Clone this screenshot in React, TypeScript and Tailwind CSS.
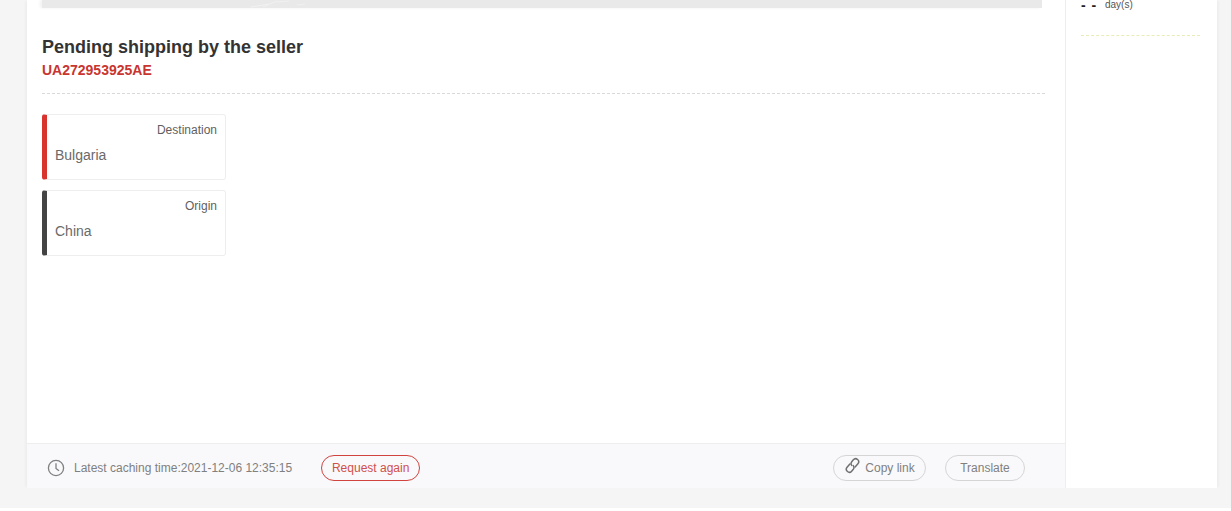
import React from "react";

function Card({ label, value, bar }: { label: string; value: string; bar: string }) {
  return (
    <div className={`h-[66px] w-[184px] rounded-[3px] border border-[#eeeeee] border-l-0 bg-white ${bar} pl-[8px] pr-[8px]`}>
      <div className="pt-[7px] text-right text-[12px] leading-[16px] text-[#5f5f5f]">{label}</div>
      <div className="mt-[7px] text-[14px] leading-[20px] text-[#6a6a6a]">{value}</div>
    </div>
  );
}

export default function App() {
  return (
    <div className="h-[511px] w-[1231px] overflow-hidden bg-white font-['Liberation_Sans',Arial,sans-serif]">
      <div className="flex h-[508px] overflow-hidden bg-[#f5f5f5] pl-[27px] pr-[14px]">
        <div className="flex h-[488px] w-full bg-white shadow-[3px_0_2px_-1px_rgba(0,0,0,0.03),-3px_0_2px_-1px_rgba(0,0,0,0.03)]">
          <div className="flex w-[1039px] flex-col border-r border-[#eeeeee]">
            <div className="flex-1 pl-[15px]">
              <div className="relative h-[8px] w-[1000px] bg-[#e9e9e9] shadow-[-2px_0_3px_rgba(0,0,0,0.06)]">
                <svg className="absolute left-[205px] top-0" width="70" height="8" viewBox="0 0 70 8" fill="none" stroke="#f1f1f1" strokeWidth="1">
                  <path d="M4 7L22 4M16 7L30 1M30 2L42 1M50 5L58 4" />
                </svg>
              </div>
              <h1 className="mt-[28px] text-[18px] font-bold leading-[22px] text-[#333333]">Pending shipping by the seller</h1>
              <div className="mt-[3px] text-[14px] font-bold leading-[18px] text-[#c9352f]">UA272953925AE</div>
              <div className="mt-[14px] w-[1003px] border-t border-dashed border-[#d9d9d9]" />
              <div className="mt-[20px] flex flex-col gap-[10px]">
                <Card label="Destination" value="Bulgaria" bar="border-l-[5px] border-l-[#d9332e]" />
                <Card label="Origin" value="China" bar="border-l-[5px] border-l-[#444444]" />
              </div>
            </div>
            <div className="flex h-[45px] items-center border-t border-[#eeeeee] bg-[#f9f9fb] pl-[20px] pr-[40px] pt-[4px] text-[12px] text-[#808080]">
              <svg width="18" height="18" viewBox="0 0 18 18" fill="none" stroke="#808080" strokeWidth="1.3">
                <circle cx="9" cy="9" r="7.6" />
                <path d="M9 4.2V9.4L12 11.8" />
              </svg>
              <span className="ml-[9px]">Latest caching time:2021-12-06 12:35:15</span>
              <button className="ml-[29px] h-[26px] w-[99px] rounded-full border border-[#d0433e] text-[12px] text-[#d0504b]">Request again</button>
              <button className="ml-auto flex h-[26px] w-[93px] items-center justify-center gap-[4px] rounded-full border border-[#d5d5d5] text-[12px] text-[#808080]">
                <svg className="-mt-[5px]" width="17" height="17" viewBox="0 0 16 16" fill="none" stroke="#707070" strokeWidth="1.4" strokeLinecap="round">
                  <g transform="rotate(-50 8 8)">
                    <path d="M7.5 5.2H3.4a2.8 2.8 0 0 0 0 5.6h2.4a2.8 2.8 0 0 0 2.6-2.2" />
                    <path d="M8.5 10.8h4.1a2.8 2.8 0 0 0 0-5.6h-2.4a2.8 2.8 0 0 0-2.6 2.2" />
                  </g>
                </svg>
                Copy link
              </button>
              <button className="ml-[19px] h-[26px] w-[80px] rounded-full border border-[#d5d5d5] text-[12px] text-[#808080]">Translate</button>
            </div>
          </div>
          <div className="flex-1 pl-[15px] pr-[17px]">
            <div className="flex h-[10px] items-center">
              <span className="w-[24px] text-[14px] font-bold leading-[10px] tracking-[1px] text-[#222222]">- -</span>
              <span className="text-[10px] leading-[10px] text-[#555555]">day(s)</span>
            </div>
            <div className="mt-[25px] border-t border-dashed border-[#e9ecb4]" />
          </div>
        </div>
      </div>
    </div>
  );
}
